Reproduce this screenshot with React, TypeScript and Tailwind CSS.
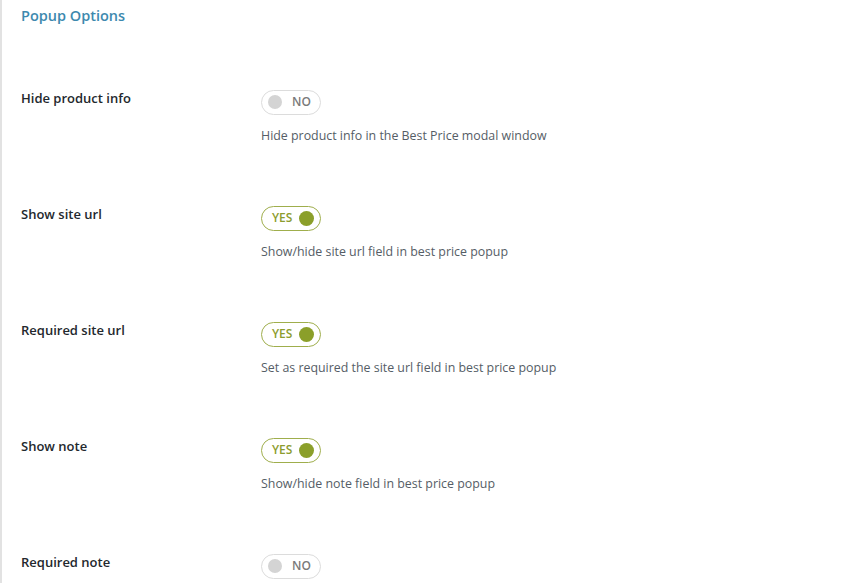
import React from "react";

type Option = {
  label: string;
  enabled: boolean;
  description?: string;
};

const options: Option[] = [
  {
    label: "Hide product info",
    enabled: false,
    description: "Hide product info in the Best Price modal window",
  },
  {
    label: "Show site url",
    enabled: true,
    description: "Show/hide site url field in best price popup",
  },
  {
    label: "Required site url",
    enabled: true,
    description: "Set as required the site url field in best price popup",
  },
  {
    label: "Show note",
    enabled: true,
    description: "Show/hide note field in best price popup",
  },
  { label: "Required note", enabled: false },
];

function Toggle({ on }: { on: boolean }) {
  if (on) {
    return (
      <span className="flex h-[25px] w-[60px] items-center justify-between rounded-full border border-[#9fae4c] pl-[10px] pr-[6px] text-[12px] font-semibold text-[#8c9c2e]">
        YES
        <span className="h-[15px] w-[15px] rounded-full bg-[#8b9f2a]" />
      </span>
    );
  }
  return (
    <span className="flex h-[25px] w-[60px] items-center gap-[10px] rounded-full border border-[#dcdcdc] pl-[6px] text-[12px] font-semibold text-[#7a7a7a]">
      <span className="h-[14px] w-[14px] rounded-full bg-[#d4d4d4]" />
      NO
    </span>
  );
}

export default function App() {
  return (
    <div
      className="h-[583px] w-[861px] overflow-hidden border-l-2 border-[#e2e2e2] bg-white"
      style={{ fontFamily: '"Open Sans", "Noto Sans", sans-serif' }}
    >
      <h2 className="pl-[19px] pt-[5px] text-[14.5px] font-semibold text-[#3d89ae]">
        Popup Options
      </h2>
      <div className="pt-[62px]">
        {options.map((opt) => (
          <div key={opt.label} className="flex h-[116px] pl-[19px]">
            <p className="w-[240px] text-[13px] font-semibold text-[#23282d]">
              {opt.label}
            </p>
            <div className="flex flex-col pt-[1px]">
              <Toggle on={opt.enabled} />
              {opt.description && (
                <p className="mt-[12px] text-[12.4px] text-[#555d66]">
                  {opt.description}
                </p>
              )}
            </div>
          </div>
        ))}
      </div>
    </div>
  );
}
